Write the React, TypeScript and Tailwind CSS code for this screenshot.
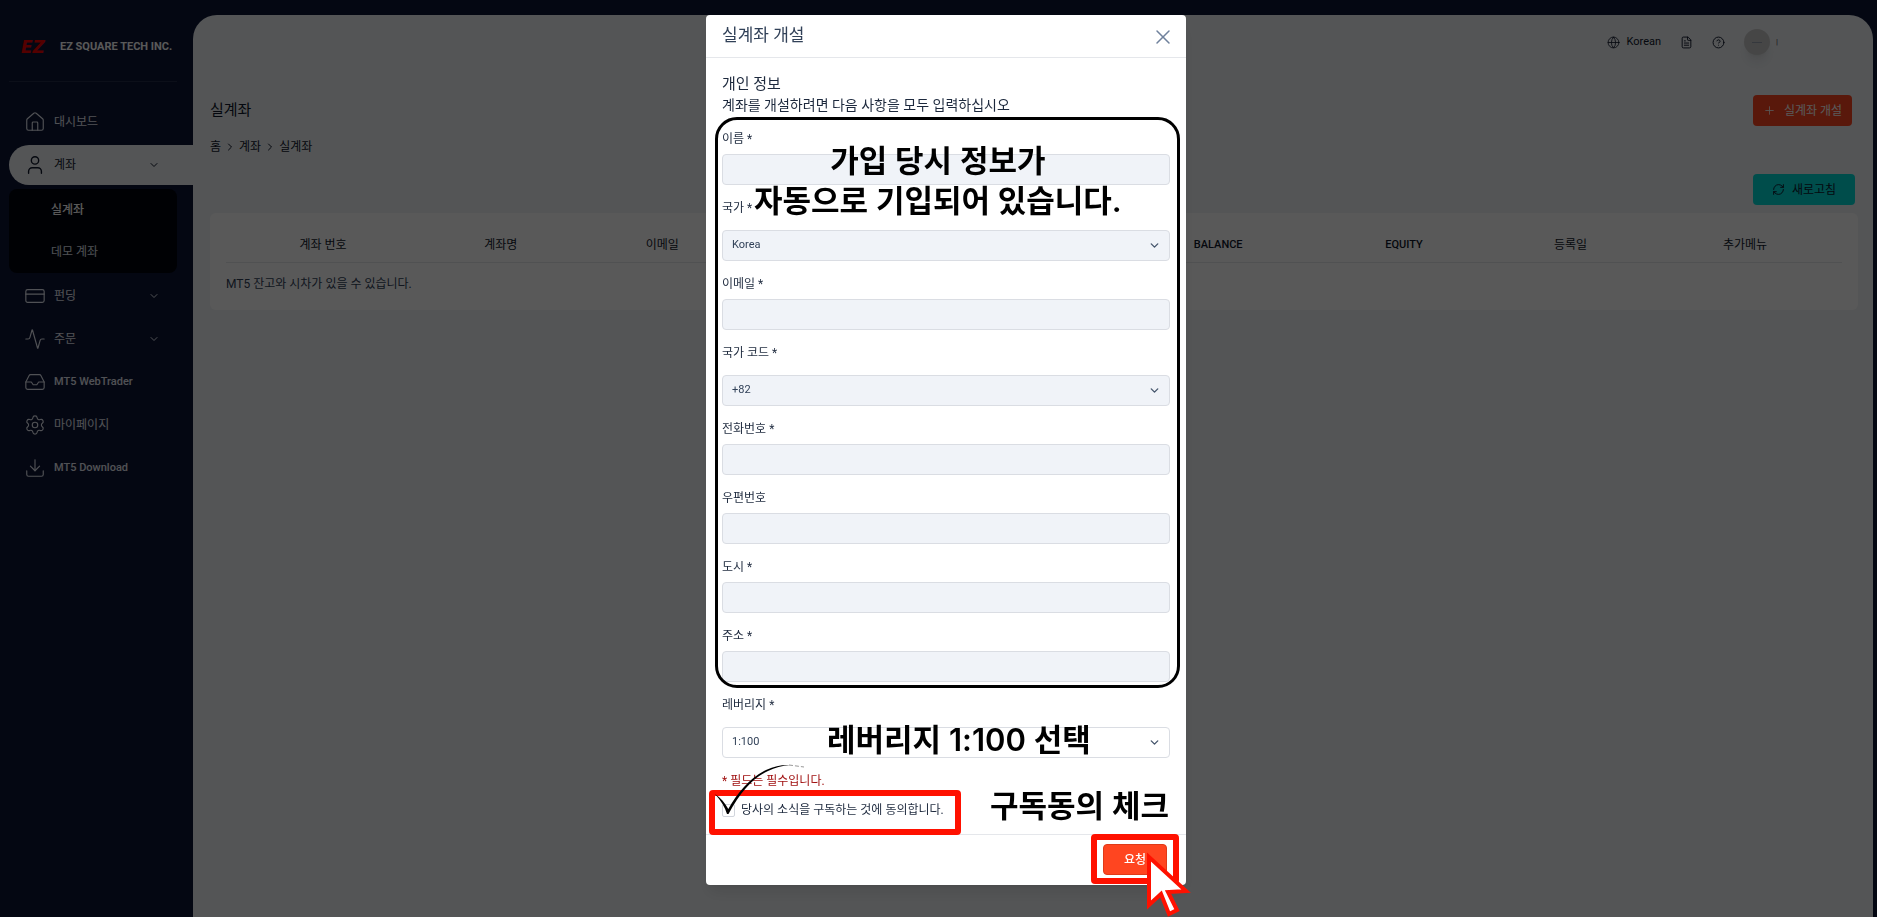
import React, { useState } from 'react'
import {
    Activity,
    ChevronDown,
    ChevronRight,
    CircleHelp,
    CreditCard,
    Download,
    FileText,
    Globe,
    House,
    Inbox,
    Plus,
    RefreshCw,
    Settings,
    User,
    X,
} from 'lucide-react'

interface fieldProps {
    id: string;
    label: string;
    options?: string[];
    editable?: boolean;
}

interface navProps {
    icon: React.ReactNode;
    label: string;
    expandable?: boolean;
    active?: boolean;
    latin?: boolean;
}

const columns = [
    { title: '계좌 번호', style: 'w-[12%] font-normal' },
    { title: '계좌명', style: 'w-[10%] font-normal' },
    { title: '이메일', style: 'w-[10%] font-normal' },
    { title: '', style: 'w-[23.4%]' },
    { title: 'BALANCE', style: 'w-[12%] text-[11px] font-medium' },
    { title: 'EQUITY', style: 'w-[11%] text-[11px] font-medium' },
    { title: '등록일', style: 'w-[9.6%] font-normal' },
    { title: '추가메뉴', style: 'w-[12%] font-normal' },
]

const fields: fieldProps[] = [
    { id: 'name', label: '이름 *' },
    { id: 'country', label: '국가 *', options: ['Korea'] },
    { id: 'email', label: '이메일 *' },
    { id: 'countryCode', label: '국가 코드 *', options: ['+82'] },
    { id: 'phone', label: '전화번호 *' },
    { id: 'zip', label: '우편번호' },
    { id: 'city', label: '도시 *' },
    { id: 'address', label: '주소 *' },
    { id: 'leverage', label: '레버리지 *', options: ['1:100'], editable: true },
]

const NavItem = ({ icon, label, expandable, active, latin }: navProps) => (
    <a
        href="#"
        className={`flex h-10 items-center gap-2 rounded-l-[20px] pl-[15px] pr-[33px] ${latin ? 'text-[11px] font-medium' : ''} ${active ? 'bg-[#f1f4f7] text-slate-900' : 'text-[#e6e9f2]'}`}
    >
        {icon}
        <span>{label}</span>
        {expandable && <ChevronDown size={12} strokeWidth={2} className="ml-auto" />}
    </a>
)

const Sidebar = () => (
    <aside className="w-[193px] shrink-0 pl-[9px]">
        {/* Logo */}
        <div className="mr-4 flex h-[67px] items-center gap-2 border-b border-white/10 pb-[2px] pl-3 whitespace-nowrap">
            <span className="w-[31px] font-['DejaVu_Sans'] text-[17px] leading-4 font-bold italic text-[#f00000]">EZ</span>
            <span className="text-[11px] font-bold text-white">EZ SQUARE TECH INC.</span>
        </div>

        <nav className="mt-5 flex flex-col gap-[3px]">
            <NavItem icon={<House size={22} strokeWidth={1.25} />} label="대시보드" />
            <NavItem icon={<User size={22} strokeWidth={1.5} />} label="계좌" expandable active />

            {/* Sub menu */}
            <div className="mt-px mr-4 flex flex-col rounded-lg bg-[#02040c] pl-[42px]">
                <a href="#" className="flex h-[42px] items-center font-medium text-white">실계좌</a>
                <a href="#" className="flex h-[42px] items-center text-[#dfe3ee]">데모 계좌</a>
            </div>

            <NavItem icon={<CreditCard size={22} strokeWidth={1.25} />} label="펀딩" expandable />
            <NavItem icon={<Activity size={22} strokeWidth={1.25} />} label="주문" expandable />
            <NavItem icon={<Inbox size={22} strokeWidth={1.25} />} label="MT5 WebTrader" latin />
            <NavItem icon={<Settings size={22} strokeWidth={1.25} />} label="마이페이지" />
            <NavItem icon={<Download size={22} strokeWidth={1.25} />} label="MT5 Download" latin />
        </nav>
    </aside>
)

const Accounts = () => (
    <main className="mr-1 min-w-0 flex-1 rounded-t-[24px] bg-[#f1f4f7] pr-[15px] pl-[17px] text-slate-900">
        {/* Top bar */}
        <header className="flex h-[54px] items-center justify-end gap-[19px] pr-20">
            <button type="button" className="flex items-center gap-[7px] text-[11px]">
                <Globe size={13} strokeWidth={1.5} />
                Korean
            </button>
            <button type="button" aria-label="문서"><FileText size={13} strokeWidth={1.75} /></button>
            <button type="button" aria-label="도움말"><CircleHelp size={13} strokeWidth={1.75} /></button>
            <div className="flex items-center gap-[6px]">
                <span className="flex h-[26px] w-[26px] items-center justify-center rounded-full bg-[#c9c9c9] shadow-lg">
                    <span className="h-px w-[10px] bg-gray-400" />
                </span>
                <span className="text-[8px] text-gray-700">|</span>
            </div>
        </header>

        <div className="mt-[26px] flex h-[31px] items-center justify-between pr-[6px]">
            <h1 className="text-[15px]">실계좌</h1>
            <button type="button" className="flex h-[31px] w-[99px] items-center justify-center gap-2 rounded bg-[#ff4520] text-white">
                <Plus size={13} strokeWidth={1.5} />
                실계좌 개설
            </button>
        </div>

        <div className="mt-3 flex items-center gap-[3px] leading-[18px]">
            <a href="#">홈</a>
            <ChevronRight size={12} strokeWidth={2} />
            <a href="#">계좌</a>
            <ChevronRight size={12} strokeWidth={2} />
            <span>실계좌</span>
        </div>

        <div className="mt-[18px] flex justify-end pr-[3px]">
            <button type="button" className="flex h-[31px] w-[102px] items-center justify-center gap-[7px] rounded bg-[#00dcd8]">
                <RefreshCw size={13} strokeWidth={1.75} />
                새로고침
            </button>
        </div>

        {/* Account table */}
        <div className="mt-2 rounded-md bg-white px-4 pt-4 pb-1">
            <table className="w-full table-fixed">
                <thead>
                    <tr className="border-b border-gray-200">
                        {columns.map((col, i) => (
                            <th key={i} className={`h-[33px] ${col.style}`}>{col.title}</th>
                        ))}
                    </tr>
                </thead>
                <tbody>
                    <tr>
                        <td colSpan={8} className="h-[44px] text-slate-700">MT5 잔고와 시차가 있을 수 있습니다.</td>
                    </tr>
                </tbody>
            </table>
        </div>
    </main>
)

const Field = ({ id, label, options, editable }: fieldProps) => {

    const control = `h-[31px] w-full appearance-none rounded border border-[#dadde3] px-[9px] text-[11px] text-slate-700 ${editable ? 'bg-white' : 'bg-[#f0f3f8]'}`

    return (
        <div className="mt-[14px]">
            <label htmlFor={id} className={`block leading-[18px] ${options ? 'mb-[13px]' : 'mb-[6px]'}`}>{label}</label>
            {options ? (
                <div className="relative">
                    <select id={id} className={control}>
                        {options.map((option) => <option key={option}>{option}</option>)}
                    </select>
                    <ChevronDown size={13} strokeWidth={2.5} className="pointer-events-none absolute top-[9px] right-[9px] text-slate-600" />
                </div>
            ) : (
                <input id={id} type="text" readOnly className={`block ${control}`} />
            )}
        </div>
    )
}

const note = 'absolute z-10 text-center font-[Inter,"Noto_Sans_CJK_KR",sans-serif] text-[31px] leading-10 font-semibold whitespace-nowrap text-black'

const GuideNotes = () => (
    <div className="pointer-events-none">
        <div className="absolute top-[102px] left-[9px] h-[571px] w-[465px] rounded-[22px] border-3 border-black" />
        <p className={`${note} top-[126px] left-12`}>
            가입 당시 정보가
            <br />
            자동으로 기입되어 있습니다.
        </p>
        <p className={`${note} top-[705px] left-[121px]`}>레버리지 1:100 선택</p>
        <p className={`${note} top-[771px] right-[17px]`}>구독동의 체크</p>

        <div className="absolute top-[775px] left-[3px] h-[45px] w-[252px] rounded-sm border-6 border-[#ff1100]" />
        <div className="absolute top-[819px] left-[385px] h-[50px] w-[88px] rounded-sm border-6 border-[#ff1100]" />

        {/* Hand drawn tick */}
        <svg width="94" height="56" viewBox="0 0 94 56" className="absolute top-[747px] left-2">
            <path d="M1 32 C7 36 11 41 14.3 47 C24 30 36 16 52 8 C61 4 68 2.5 76 3 C68 3.5 61 6 54 9 C39 16 27 29 14.5 52 L13 52 C11 45 7 39 1 32 Z" fill="#000" />
            <path d="M75 3 L90 5" stroke="#999" strokeWidth="1" strokeDasharray="4 2" fill="none" />
        </svg>

        {/* Mouse pointer */}
        <svg width="48" height="68" viewBox="0 0 48 68" className="absolute top-[836px] left-[439px]">
            <path d="M4 6 L4 54 L16 43 L24 63 L32 59 L23 41 L41 40 Z" fill="#fff" stroke="#ff1100" strokeWidth="4" />
        </svg>
    </div>
)

const OpenAccountModal = ({ onClose }: { onClose: () => void }) => {

    const [agree, setAgree] = useState<boolean>(false)

    return (
        <div className="fixed inset-0 z-50 flex items-start justify-center overflow-hidden bg-black/65 pt-[15px] pl-[15px]">

            {/* Modal Card */}
            <div role="dialog" aria-label="실계좌 개설" className="relative w-full max-w-[480px] rounded bg-white text-slate-800 shadow-lg">

                {/* Title */}
                <div className="flex h-[43px] items-center justify-between border-b border-gray-200 pr-[11px] pb-[2px] pl-4">
                    <h2 className="text-[17px] text-slate-700">실계좌 개설</h2>
                    <button type="button" aria-label="닫기" onClick={onClose} className="pt-1 text-[#6f819c]">
                        <X size={24} strokeWidth={1.5} />
                    </button>
                </div>

                {/* Form */}
                <div className="px-4 pt-[15px] pb-[15px]">
                    <h3 className="text-[15px] leading-[22px]">개인 정보</h3>
                    <p className="text-sm leading-[21px]">계좌를 개설하려면 다음 사항을 모두 입력하십시오</p>

                    {fields.map((field) => <Field key={field.id} {...field} />)}

                    <p className="mt-[14px] leading-[18px] text-[#a01010]">* 필드는 필수입니다.</p>
                    <label className="mt-[11px] flex items-center gap-[6px] leading-[18px]">
                        <input
                            type="checkbox"
                            checked={agree}
                            onChange={(e) => setAgree(e.target.checked)}
                            className="h-[13px] w-[13px] appearance-none rounded-xs border border-gray-300"
                        />
                        당사의 소식을 구독하는 것에 동의합니다.
                    </label>
                </div>

                {/* Buttons */}
                <div className="flex justify-end border-t border-gray-200 pt-[9px] pr-[19px] pb-[10px]">
                    <button type="button" className="h-[31px] w-16 rounded border border-[#e03a18] bg-[#ff4520] font-medium text-white">
                        요청
                    </button>
                </div>

                <GuideNotes />
            </div>
        </div>
    )
}

const App = () => {

    const [open, setOpen] = useState<boolean>(true)

    return (
        <div className="flex min-h-screen bg-[#0c1535] pt-[15px] font-[Roboto,'Noto_Sans_CJK_KR',sans-serif] text-xs">
            <Sidebar />
            <Accounts />
            {open && <OpenAccountModal onClose={() => setOpen(false)} />}
        </div>
    )
}

export default App
